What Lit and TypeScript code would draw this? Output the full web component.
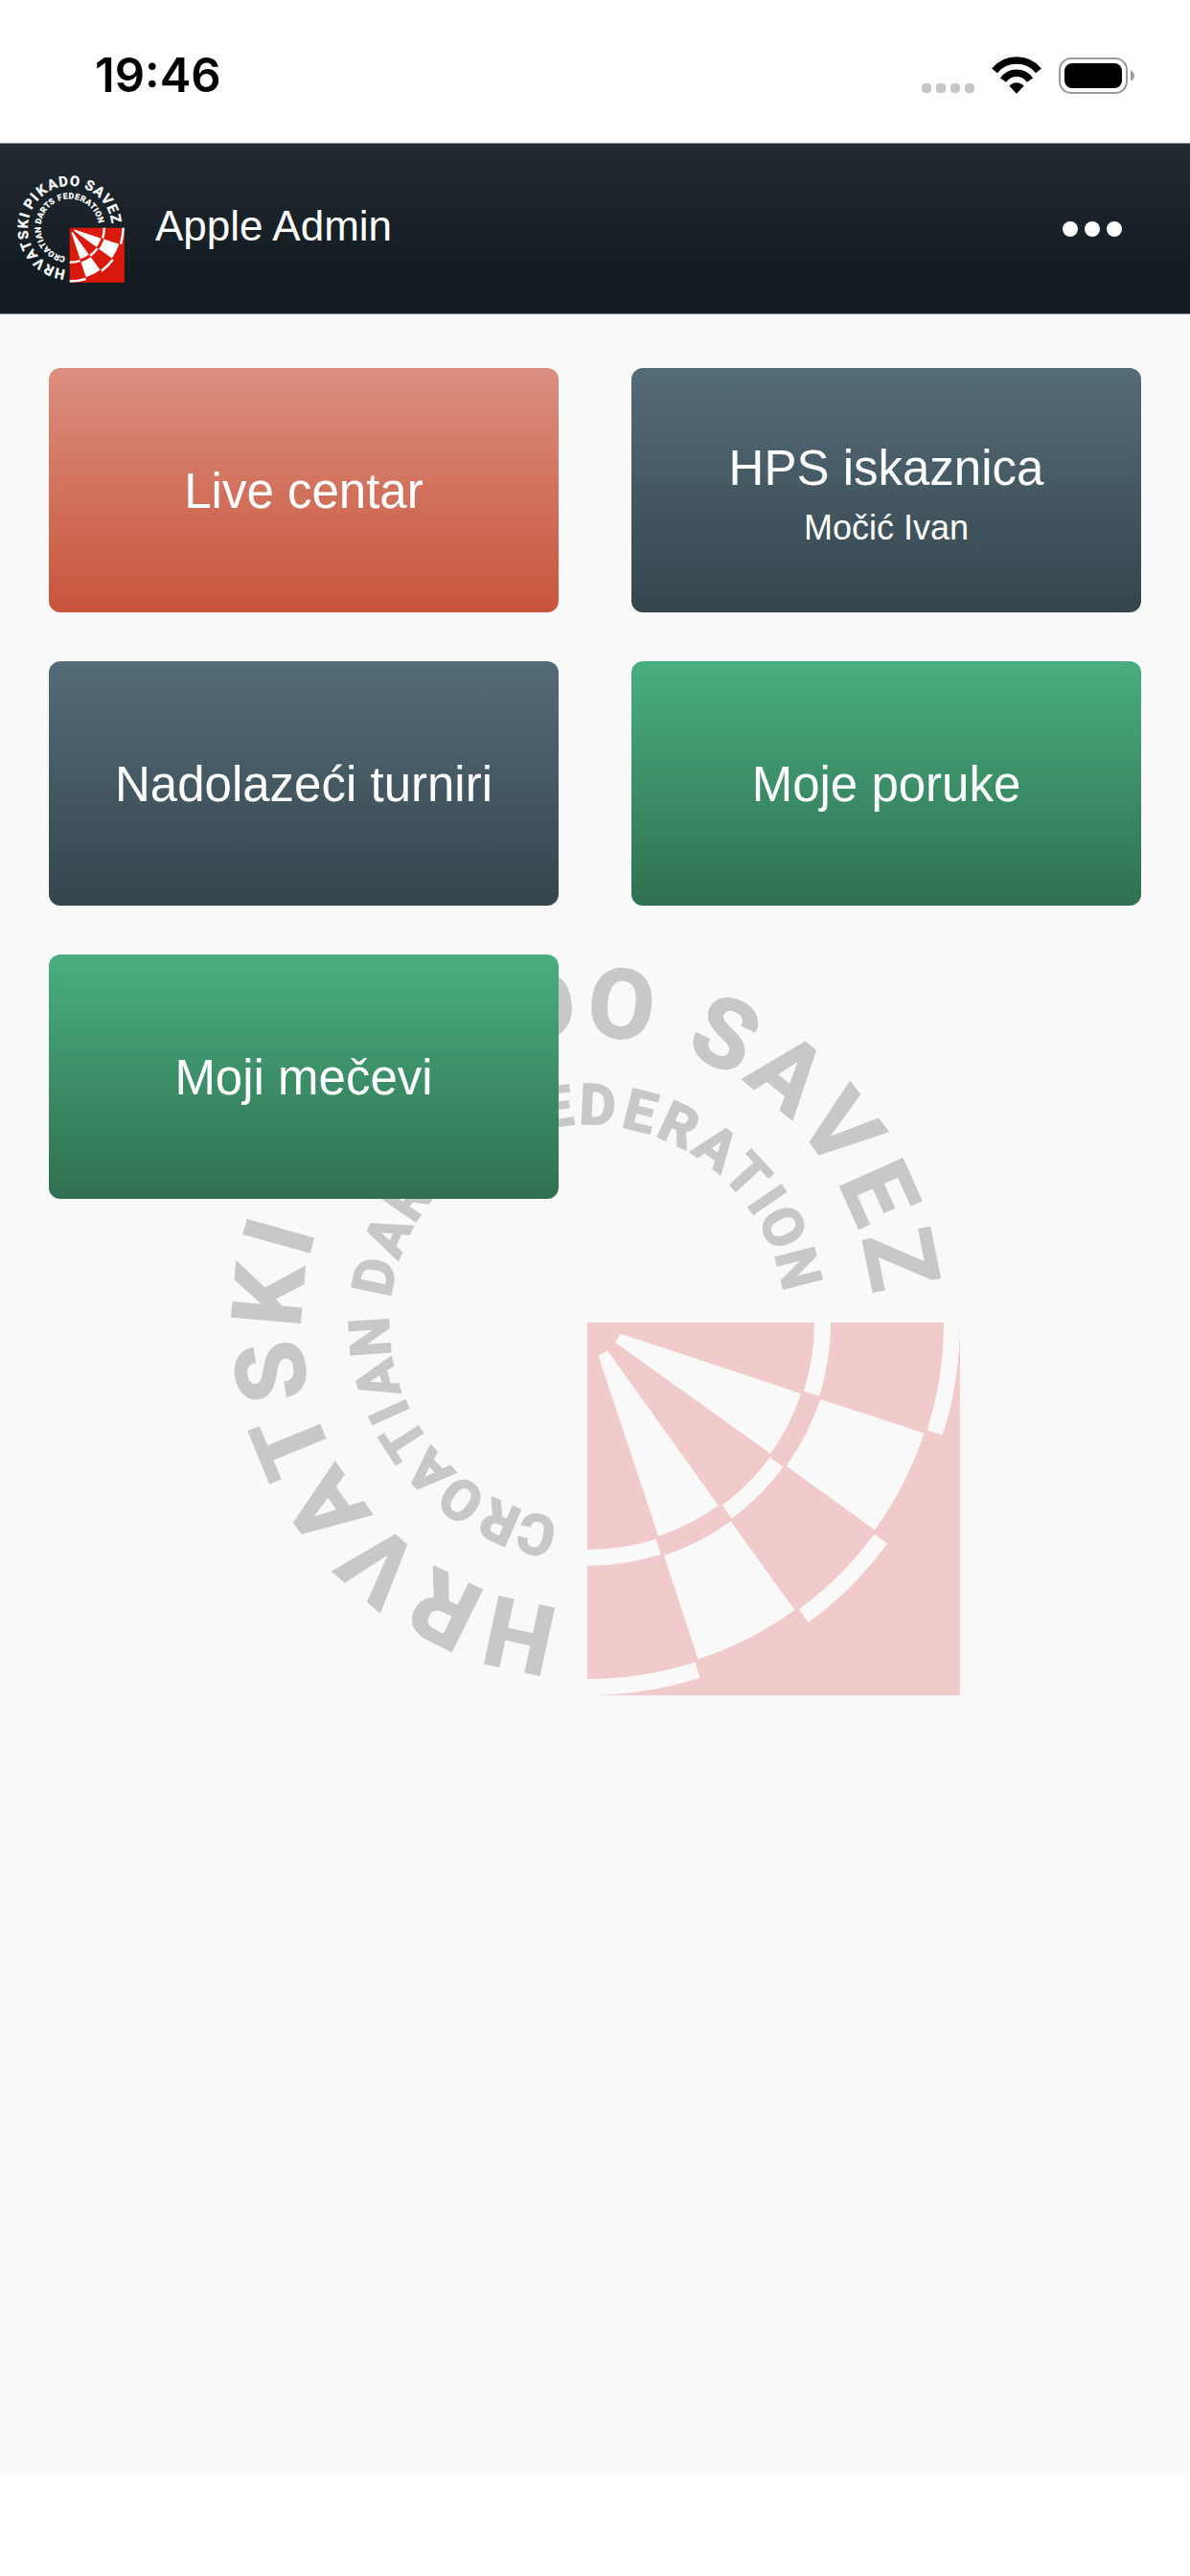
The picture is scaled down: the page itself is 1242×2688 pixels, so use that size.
import { LitElement, html, svg, css } from "lit";
import { customElement, property } from "lit/decorators.js";
import { classMap } from "lit/directives/class-map.js";

/** A ring of lettering: each character with the angle of its centre, clockwise from the bottom. */
type Ring = { id: string; radius: number; text: string; angles: number[] };

const OUTER_RING: Ring = {
  id: "ring-outer",
  radius: 299,
  text: "HRVATSKI PIKADO SAVEZ",
  angles: [
    12.3, 26.4, 40.7, 54.6, 67.6, 81, 94.8, 105.5, 113, 120.8, 131, 143, 158, 172, 186.1, 196,
    205.5, 218.8, 232.5, 245.9, 258.5,
  ],
};

const INNER_RING: Ring = {
  id: "ring-inner",
  radius: 207,
  text: "CROATIAN DARTS FEDERATION",
  angles: [
    13.5, 23.7, 35.3, 46.4, 57.4, 65.5, 74.6, 86.2, 95, 102, 113.4, 124.5, 135, 145, 153, 161.5,
    172, 182.8, 193.9, 204.7, 216.5, 227.3, 235.5, 243.8, 255.6,
  ],
};

/** Dartboard fields left open in the square: [inner radius, outer radius, from, to] in degrees. */
const FIELDS: number[][] = [
  [36, 235, 18.4, 35.6],
  [36, 235, 54.4, 71.6],
  [256, 370, 18.2, 35.8],
  [256, 370, 54.2, 71.8],
  [237, 254, 0, 17.6],
  [237, 254, 36.4, 53.6],
  [237, 254, 72.4, 90],
  [372, 389, 0, 17.6],
  [372, 389, 36.4, 53.6],
  [372, 389, 72.4, 90],
];

const point = (r: number, deg: number) => {
  const a = (deg * Math.PI) / 180;
  return `${(r * Math.cos(a)).toFixed(1)} ${(r * Math.sin(a)).toFixed(1)}`;
};

const sector = ([r0, r1, a0, a1]: number[]) =>
  `M${point(r0, a0)}L${point(r1, a0)}A${r1} ${r1} 0 0 1 ${point(r1, a1)}` +
  `L${point(r0, a1)}A${r0} ${r0} 0 0 0 ${point(r0, a0)}Z`;

@customElement("federation-logo")
export class FederationLogo extends LitElement {
  static styles = css`
    :host {
      display: block;
      color: #ffffff;
      --square: #d9190c;
      --field: #ffffff;
    }
    .logo {
      display: block;
      width: 100%;
      height: auto;
    }
    .ring {
      fill: currentColor;
      stroke: currentColor;
      stroke-width: 2px;
      font-family: Roboto, "Liberation Sans", sans-serif;
      font-weight: 700;
      text-anchor: middle;
    }
    .outer {
      font-size: 100px;
    }
    .inner {
      font-size: 58px;
    }
    .square {
      fill: var(--square);
    }
    .field {
      fill: var(--field);
    }
  `;

  private ring(r: Ring, size: string) {
    const xs = r.angles.map((a) => Math.round((a * Math.PI * r.radius) / 180)).join(" ");
    return svg`
      <path id=${r.id} fill="none"
        d="M0 ${r.radius}A${r.radius} ${r.radius} 0 0 1 0 ${-r.radius}A${r.radius} ${r.radius} 0 0 1 0 ${r.radius}"></path>
      <text class="ring ${size}" x=${xs}><textPath href="#${r.id}">${r.text}</textPath></text>
    `;
  }

  render() {
    return html`
      <svg class="logo" viewBox="-373 -373 763 763">
        ${this.ring(OUTER_RING, "outer")} ${this.ring(INNER_RING, "inner")}
        <rect class="square" width="389" height="389"></rect>
        ${FIELDS.map((f) => svg`<path class="field" d=${sector(f)}></path>`)}
      </svg>
    `;
  }
}

@customElement("status-bar")
export class StatusBar extends LitElement {
  static styles = css`
    :host {
      display: flex;
      align-items: center;
      justify-content: space-between;
      box-sizing: border-box;
      height: 149px;
      padding: 8px 57px 0 99px;
      background: #ffffff;
      color: #000000;
    }
    .time {
      font: 600 49px/60px Inter, "Liberation Sans", sans-serif;
    }
    .icons {
      display: flex;
      align-items: center;
      gap: 18px;
    }
    .icon {
      display: block;
    }
  `;

  render() {
    return html`
      <time class="time">19:46</time>
      <div class="icons">
        <svg class="icon" width="55" height="40" viewBox="0 0 55 40" fill="#c6c6c6">
          ${[0, 15, 30, 45].map((x) => svg`<rect x=${x} y="28" width="10" height="10" rx="4"></rect>`)}
        </svg>
        <svg class="icon" width="52" height="40" viewBox="0 0 52 40">
          <g fill="none" stroke="#000000" stroke-width="7.4">
            <path d="M3 14.8A30 30 0 0 1 49 14.8"></path>
            <path d="M12 24.6A17 17 0 0 1 40 24.6"></path>
          </g>
          <path d="M26 38.7L18.4 30.8A10 10 0 0 1 33.6 30.8Z"></path>
        </svg>
        <svg class="icon" width="80" height="40" viewBox="0 0 80 40">
          <rect x="1" y="2" width="70" height="36" rx="12" fill="none" stroke="#9a9a9a" stroke-width="2"></rect>
          <rect x="6" y="7" width="60" height="26" rx="8"></rect>
          <path d="M75 14.5Q79 16.5 79 20T75 25.5Z" fill="#9a9a9a"></path>
        </svg>
      </div>
    `;
  }
}

@customElement("app-header")
export class AppHeader extends LitElement {
  @property() user = "";

  static styles = css`
    :host {
      display: flex;
      align-items: center;
      justify-content: space-between;
      box-sizing: border-box;
      height: 179px;
      padding: 0 62px 0 18px;
      border-top: 1px solid #858b8d;
      border-bottom: 1px solid #7c8485;
      background: linear-gradient(#222931, #131d21 75%);
    }
    .brand {
      display: flex;
      align-items: center;
      gap: 32px;
      color: #ffffff;
      text-decoration: none;
    }
    .mark {
      width: 112px;
    }
    .name {
      padding-bottom: 6px;
      font: 44px/56px "Liberation Sans", Arial, sans-serif;
    }
    .menu {
      padding: 8px;
      border: 0;
      background: none;
    }
    .dots {
      display: block;
    }
  `;

  render() {
    return html`
      <a class="brand" href="#">
        <federation-logo class="mark"></federation-logo>
        <span class="name">${this.user}</span>
      </a>
      <button class="menu" type="button">
        <svg class="dots" width="64" height="16" viewBox="0 0 64 16" fill="#ffffff">
          <circle cx="9" cy="8" r="8"></circle>
          <circle cx="32" cy="8" r="8"></circle>
          <circle cx="55" cy="8" r="8"></circle>
        </svg>
      </button>
    `;
  }
}

type Tone = "red" | "slate" | "green";
type Tile = { title: string; note?: string; tone: Tone };

const TILES: Tile[] = [
  { title: "Live centar", tone: "red" },
  { title: "HPS iskaznica", note: "Močić Ivan", tone: "slate" },
  { title: "Nadolazeći turniri", tone: "slate" },
  { title: "Moje poruke", tone: "green" },
  { title: "Moji mečevi", tone: "green" },
];

@customElement("app-root")
export class AppRoot extends LitElement {
  static styles = css`
    :host {
      display: flex;
      flex-direction: column;
      min-height: 100vh;
      background: #ffffff;
      font-family: "Liberation Sans", Arial, sans-serif;
    }
    .content {
      flex: 1;
      display: grid;
      align-items: start;
      margin-bottom: 108px;
      background: #f9f9f9;
    }
    .watermark,
    .tiles {
      grid-area: 1 / 1;
    }
    .watermark {
      justify-self: center;
      width: 763px;
      max-width: 100%;
      margin-top: 679px;
      color: #c8c8c8;
      --square: #f1cbcb;
      --field: #f9f9f9;
    }
    .tiles {
      position: relative;
      display: grid;
      grid-template-columns: 1fr 1fr;
      grid-auto-rows: 255px;
      gap: 51px 76px;
      padding: 56px 51px;
    }
    .tile {
      display: flex;
      flex-direction: column;
      align-items: center;
      justify-content: center;
      padding-top: 3px;
      border-radius: 12px;
      color: #ffffff;
      text-align: center;
      text-decoration: none;
    }
    .red {
      background: linear-gradient(#db8f80, #c8553b);
    }
    .slate {
      background: linear-gradient(#546c78, #35454d);
    }
    .green {
      background: linear-gradient(#49ae7f, #2f7051);
    }
    .title {
      font-size: 51px;
      line-height: 76px;
    }
    .note {
      font-size: 36px;
      line-height: 48px;
    }
  `;

  render() {
    return html`
      <status-bar></status-bar>
      <app-header user="Apple Admin"></app-header>
      <main class="content">
        <federation-logo class="watermark"></federation-logo>
        <nav class="tiles">
          ${TILES.map(
            (t) => html`
              <a class=${classMap({ tile: true, [t.tone]: true })} href="#">
                <span class="title">${t.title}</span>
                ${t.note ? html`<span class="note">${t.note}</span>` : ""}
              </a>
            `,
          )}
        </nav>
      </main>
    `;
  }
}
